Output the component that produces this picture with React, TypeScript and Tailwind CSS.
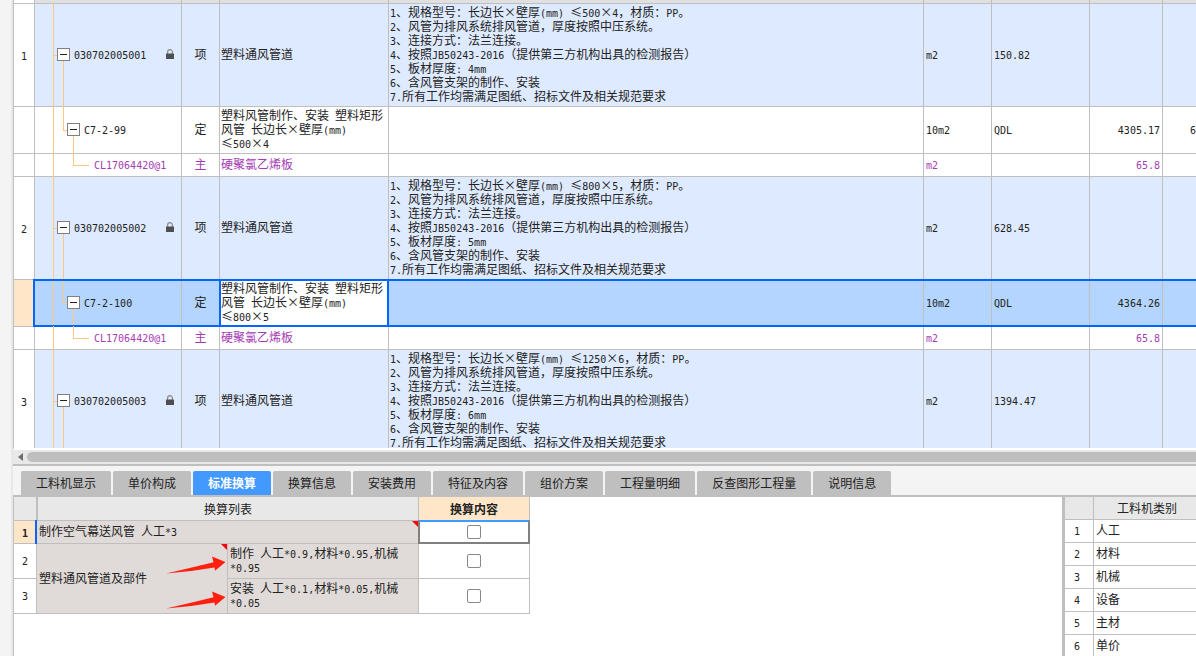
import { useState } from "react";
import clsx from "clsx";

type RowKind = "item" | "quota" | "material";

interface BillRow {
  id: string;
  no: string;
  kind: RowKind;
  code: string;
  type: string;
  name: string[];
  desc: string[];
  unit: string;
  qty: string;
  price: string;
  extra: string;
  selected?: boolean;
}

const describe = (size: string, thickness: string) => [
  `1、规格型号：长边长×壁厚(mm) ≤${size}，材质：PP。`,
  "2、风管为排风系统排风管道，厚度按照中压系统。",
  "3、连接方式：法兰连接。",
  "4、按照JB50243-2016（提供第三方机构出具的检测报告）",
  `5、板材厚度: ${thickness}`,
  "6、含风管支架的制作、安装",
  "7.所有工作均需满足图纸、招标文件及相关规范要求",
];

const item = (no: string, qty: string, size: string, thickness: string): BillRow => ({
  id: `item-${no}`, no, kind: "item", code: `03070200500${no}`, type: "项", name: ["塑料通风管道"],
  desc: describe(size, thickness), unit: "m2", qty, price: "", extra: "",
});

const quota = (code: string, size: string, price: string, extra: string, selected = false): BillRow => ({
  id: code, no: "", kind: "quota", code, type: "定",
  name: ["塑料风管制作、安装 塑料矩形", "风管 长边长×壁厚(mm)", `≤${size}`],
  desc: [], unit: "10m2", qty: "QDL", price, extra, selected,
});

const material = (id: string): BillRow => ({
  id, no: "", kind: "material", code: "CL17064420@1", type: "主", name: ["硬聚氯乙烯板"],
  desc: [], unit: "m2", qty: "", price: "65.8", extra: "",
});

const ROWS: BillRow[] = [
  item("1", "150.82", "500×4", "4mm"),
  quota("C7-2-99", "500×4", "4305.17", "6"),
  material("m-1"),
  item("2", "628.45", "800×5", "5mm"),
  quota("C7-2-100", "800×5", "4364.26", "", true),
  material("m-2"),
  item("3", "1394.47", "1250×6", "6mm"),
];

const TABS = ["工料机显示", "单价构成", "标准换算", "换算信息", "安装费用", "特征及内容", "组价方案", "工程量明细", "反查图形工程量", "说明信息"];

const CATEGORIES = ["人工", "材料", "机械", "设备", "主材", "单价"];

// Half-width runs use a fixed-pitch face so that two of them fill one CJK cell.
function Mixed({ text }: { text: string }) {
  return (
    <>
      {text.split(/([\x20-\x7e]+)/).map((part, i) =>
        i % 2 === 1 ? <span key={i} className="font-['DejaVu_Sans_Mono',monospace] text-[10px] leading-none">{part}</span> : part
      )}
    </>
  );
}

function Lines({ lines }: { lines: string[] }) {
  return (
    <>
      {lines.map((line) => (
        <div key={line} className="whitespace-nowrap"><Mixed text={line} /></div>
      ))}
    </>
  );
}

function LockIcon() {
  return (
    <svg viewBox="0 0 8 10" className="w-2 h-2.5" aria-hidden="true">
      <path d="M1.6 5V3a2.4 2.4 0 0 1 4.8 0v2" fill="none" stroke="#8a8a8a" strokeWidth="1.2" />
      <rect y="4.5" width="8" height="5.5" rx="0.5" fill="#4f4f4f" />
    </svg>
  );
}

function Toggle({ label }: { label: string }) {
  return (
    <button type="button" aria-label={label} aria-expanded="true" className="relative flex items-center justify-center w-[13px] h-[13px] shrink-0 border border-[#808080] bg-white">
      <span className="w-[7px] h-px bg-[#222]" />
    </button>
  );
}

const LINE = "absolute bg-[#ffc87f]";

function TreeCell({ row }: { row: BillRow }) {
  return (
    <>
      <span className={`${LINE} left-[18px] -top-px -bottom-px w-px`} />
      {row.kind === "item" && (
        <>
          <span className={`${LINE} left-[18px] top-1/2 w-1 h-px`} />
          <span className={`${LINE} left-7 top-1/2 -bottom-px w-px`} />
        </>
      )}
      {row.kind === "quota" && (
        <>
          <span className={`${LINE} left-7 -top-px bottom-1/2 w-px`} />
          <span className={`${LINE} left-7 top-1/2 w-1 h-px`} />
          <span className={`${LINE} left-[38px] top-1/2 -bottom-px w-px`} />
        </>
      )}
      {row.kind === "material" && (
        <>
          <span className={`${LINE} left-[38px] -top-px bottom-1/2 w-px`} />
          <span className={`${LINE} left-[38px] top-1/2 w-4 h-px`} />
        </>
      )}
      <div className={clsx("flex items-center gap-1", row.kind === "item" && "pl-[22px]", row.kind === "quota" && "pl-8", row.kind === "material" && "pl-[59px]")}>
        {row.kind !== "material" && <Toggle label={row.code} />}
        <span><Mixed text={row.code} /></span>
        {row.kind === "item" && <span className="ml-auto pr-[7px]"><LockIcon /></span>}
      </div>
    </>
  );
}

const HEAD = "relative p-0 border-r border-b border-[#bfbfbf]";
const CELL = `${HEAD} pb-0.5`;

function BillLine({ row }: { row: BillRow }) {
  const band = row.selected && <span className="absolute -inset-y-px left-0 -right-px border-y-2 border-[#0066ff] pointer-events-none" />;
  return (
    <tr
      className={clsx(
        row.kind === "item" && "h-[103px] bg-[#deeaff]",
        row.kind === "quota" && "h-[47px]",
        row.kind === "material" && "h-[23px] text-[#a53cb5]",
        row.selected && "bg-[#b3d5ff]"
      )}
    >
      <td className={clsx(HEAD, "text-center text-[#222]", row.selected ? "bg-[#ffe6c8]" : "bg-white")}><Mixed text={row.no} /></td>
      <td className={CELL}>
        <TreeCell row={row} />
        {row.selected && <span className="absolute -inset-y-px -left-0.5 -right-px border-y-2 border-l-2 border-[#0066ff] pointer-events-none" />}
      </td>
      <td className={clsx(CELL, "text-center")}>{row.type}{band}</td>
      <td className={clsx(CELL, "pl-px", row.selected && "bg-white")}>
        <Lines lines={row.name} />
        {row.selected && <span className="absolute -inset-px border-2 border-[#0066ff] pointer-events-none" />}
      </td>
      <td className={clsx(CELL, "pl-px")}><Lines lines={row.desc} />{band}</td>
      <td className={clsx(CELL, "pl-0.5")}><Mixed text={row.unit} />{band}</td>
      <td className={clsx(CELL, "pl-0.5")}><Mixed text={row.qty} />{band}</td>
      <td className={clsx(CELL, "pr-0.5 text-right")}><Mixed text={row.price} />{band}</td>
      <td className="relative p-0 pb-0.5 border-b border-[#bfbfbf] text-right"><Mixed text={row.extra} />{band}</td>
    </tr>
  );
}

function BillTable() {
  return (
    <table className="w-full table-fixed border-separate border-spacing-0">
      <colgroup>
        <col className="w-[21px]" />
        <col className="w-[147px]" />
        <col className="w-[38px]" />
        <col className="w-[169px]" />
        <col />
        <col className="w-[68px]" />
        <col className="w-[98px]" />
        <col className="w-[73px]" />
        <col className="w-[33px]" />
      </colgroup>
      <tbody>
        <tr className="h-1 bg-[#e0e0e0]">
          <td className={clsx(HEAD, "bg-white")} />
          {Array.from({ length: 7 }, (_, i) => <td key={i} className={HEAD} />)}
          <td className="p-0 border-b border-[#bfbfbf]" />
        </tr>
        {ROWS.map((row) => <BillLine key={row.id} row={row} />)}
      </tbody>
    </table>
  );
}

function ScrollStrip() {
  return (
    <div className="flex items-center h-4 shrink-0 pl-[5px] gap-1 bg-[#e8e8e8] border-b-2 border-[#bfbfbf]">
      <svg viewBox="0 0 5 8" className="w-[5px] h-2" aria-hidden="true"><path d="M5 0v8L0 4z" fill="#6b6b75" /></svg>
      <div className="flex-1 h-2.5 rounded-l-full bg-[#bfbfbf]" />
    </div>
  );
}

function Corner() {
  return (
    <svg viewBox="0 0 6 6" className="absolute top-0 right-0 w-1.5 h-1.5" aria-hidden="true"><path d="M0 0h6v6z" fill="#f00" /></svg>
  );
}

function Arrow() {
  return (
    <svg viewBox="0 0 60 18" className="absolute right-0.5 top-3 w-[60px] h-[18px]" aria-hidden="true">
      <path d="M0 17.500Q24 12 47.500 6.200L46 0.500L59.500 6L49 14.800L48.500 11.600Q24 16 0 17.500z" fill="#ff2010" />
    </svg>
  );
}

function Check({ label, checked, onChange }: { label: string; checked: boolean; onChange: () => void }) {
  return (
    <input
      type="checkbox"
      aria-label={label}
      checked={checked}
      onChange={onChange}
      className="block mx-auto w-3.5 h-3.5 appearance-none border border-[#888] rounded-xs bg-white checked:bg-[#4499ff]"
    />
  );
}

function ConversionTable() {
  const [checked, setChecked] = useState([false, false, false]);
  const toggle = (i: number) => setChecked((prev) => prev.map((v, j) => (j === i ? !v : v)));

  return (
    <table className="table-fixed w-[516px] shrink-0 self-start border-separate border-spacing-0">
      <colgroup>
        <col className="w-[23px]" />
        <col className="w-[191px]" />
        <col className="w-[191px]" />
        <col className="w-[111px]" />
      </colgroup>
      <thead>
        <tr className="h-6 bg-[#e8e8e8]">
          <th className={HEAD} />
          <th colSpan={2} className={clsx(HEAD, "font-normal border-l")}>换算列表</th>
          <th className={clsx(HEAD, "font-bold bg-[#ffe6c8]")}>换算内容</th>
        </tr>
      </thead>
      <tbody>
        <tr className="h-[23px] bg-[#e0dbd8]">
          <td className={clsx(HEAD, "text-center font-bold bg-[#ffe6c8]")}>
            <Mixed text="1" />
            <span className="absolute -inset-y-px -right-px w-0.5 bg-[#0066ff]" />
          </td>
          <td colSpan={2} className={clsx(CELL, "pl-0.5")}><Mixed text="制作空气幕送风管 人工*3" /><Corner /></td>
          <td className={clsx(HEAD, "bg-white")}>
            <Check label="制作空气幕送风管" checked={checked[0]!} onChange={() => toggle(0)} />
            <span className="absolute -inset-px border-2 border-[#808080] border-t-[#4499ff] pointer-events-none" />
          </td>
        </tr>
        <tr className="h-[35px] bg-[#e0dbd8]">
          <td className={clsx(CELL, "text-center bg-white")}><Mixed text="2" /></td>
          <td rowSpan={2} className={clsx(CELL, "pl-0.5")}>塑料通风管道及部件<Corner /></td>
          <td className={clsx(CELL, "pl-0.5")}>
            <Lines lines={["制作 人工*0.9,材料*0.95,机械", "*0.95"]} />
            <span className="absolute left-0 top-0"><Arrow /></span>
          </td>
          <td className={clsx(HEAD, "bg-white")}><Check label="制作" checked={checked[1]!} onChange={() => toggle(1)} /></td>
        </tr>
        <tr className="h-[35px] bg-[#e0dbd8]">
          <td className={clsx(CELL, "text-center bg-white")}><Mixed text="3" /></td>
          <td className={clsx(CELL, "pl-0.5")}>
            <Lines lines={["安装 人工*0.1,材料*0.05,机械", "*0.05"]} />
            <span className="absolute left-0 top-0"><Arrow /></span>
          </td>
          <td className={clsx(HEAD, "bg-white")}><Check label="安装" checked={checked[2]!} onChange={() => toggle(2)} /></td>
        </tr>
      </tbody>
    </table>
  );
}

function CategoryTable() {
  return (
    <div className="w-[134px] shrink-0 overflow-hidden border-l-3 border-[#bfbfbf]">
      <table className="w-full table-fixed border-separate border-spacing-0">
        <colgroup>
          <col className="w-[29px]" />
          <col />
        </colgroup>
        <thead>
          <tr className="h-[23px] bg-[#e8e8e8]">
            <th className={HEAD} />
            <th className="p-0 pl-1 border-b border-[#bfbfbf] font-normal">工料机类别</th>
          </tr>
        </thead>
        <tbody>
          {CATEGORIES.map((name, i) => (
            <tr key={name} className="h-[23px] last:h-[21px] last:*:border-b-0">
              <td className={clsx(CELL, "pr-1 text-center")}><Mixed text={String(i + 1)} /></td>
              <td className="p-0 pl-0.5 pb-0.5 border-b border-[#bfbfbf]">{name}</td>
            </tr>
          ))}
        </tbody>
      </table>
    </div>
  );
}

export default function App() {
  const [tab, setTab] = useState("标准换算");

  return (
    <div className="flex h-screen overflow-hidden bg-[#f4f4f4] font-['Noto_Sans_CJK_SC',sans-serif] text-[12px] leading-[14px] text-[#222]">
      <div className="w-[13px] shrink-0 border-r-2 border-[#e8e8e8]" />
      <main className="flex flex-col flex-1 min-w-0">
        <div className="flex-1 min-h-0 overflow-hidden bg-white border-l border-l-[#bfbfbf] border-b-2 border-b-white">
          <BillTable />
        </div>
        <ScrollStrip />

        {/* Detail tabs */}
        <nav className="flex shrink-0 gap-0.5 pt-[5px] pl-2">
          {TABS.map((name) => (
            <button
              key={name}
              type="button"
              onClick={() => setTab(name)}
              className={clsx("h-6 px-[15px] rounded-t-xs whitespace-nowrap", name === tab ? "bg-[#4499ff] text-white font-bold" : "bg-[#bfbfbf]")}
            >
              {name}
            </button>
          ))}
        </nav>

        {/* Detail panes */}
        <div className="flex shrink-0 justify-between bg-white border-t-2 border-l border-[#bfbfbf]">
          <ConversionTable />
          <CategoryTable />
        </div>
      </main>
    </div>
  );
}
